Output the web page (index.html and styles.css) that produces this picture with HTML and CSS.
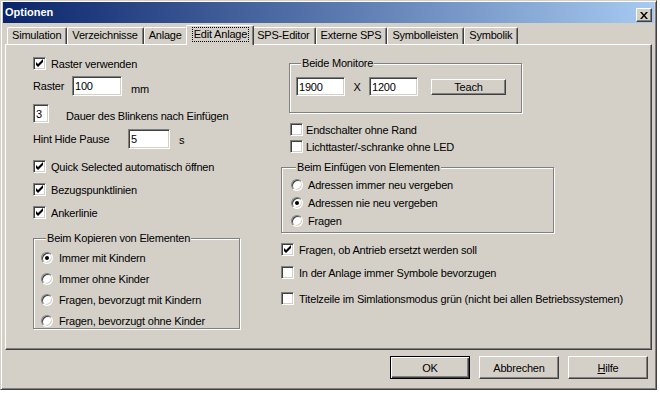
FILE: index.html
```html
<!DOCTYPE html>
<html lang="de">
  <head>
    <meta charset="UTF-8" />
    <title>Optionen</title>
    <link rel="stylesheet" href="styles.css">
  </head>
  <body>
    <div class="window">
      <div class="titlebar">
        <span class="title">Optionen</span>
        <span class="close">
          <svg width="8" height="7" viewBox="0 0 8 7"><path d="M0 0h2l2 2.5L6 0h2L5 3.5 8 7H6L4 4.5 2 7H0l3-3.5z" fill="#000"/></svg>
        </span>
      </div>

      <div class="tabs">
        <div class="tab">Simulation</div>
        <div class="tab">Verzeichnisse</div>
        <div class="tab">Anlage</div>
        <div class="tab active"><span class="focus">Edit Anlage</span></div>
        <div class="tab">SPS-Editor</div>
        <div class="tab">Externe SPS</div>
        <div class="tab">Symbolleisten</div>
        <div class="tab">Symbolik</div>
      </div>

      <div class="panel">
        <div class="col-left">
          <label class="check on first"><span class="box"><svg width="13" height="13" viewBox="0 0 13 13"><polygon points="3,5 5,7 10,2 10,5 5,10 3,8" fill="#000"/></svg></span>Raster verwenden</label>

          <div class="row raster">
            <span class="lbl">Raster</span>
            <input class="field w-raster" type="text" value="100">
            <span class="unit">mm</span>
          </div>

          <div class="row blink">
            <input class="field w-blink" type="text" value="3">
            <span class="after">Dauer des Blinkens nach Einfügen</span>
          </div>

          <div class="row hint">
            <span class="lbl hint-lbl">Hint Hide Pause</span>
            <input class="field w-hint" type="text" value="5">
            <span class="unit-s">s</span>
          </div>

          <label class="check on quick"><span class="box"><svg width="13" height="13" viewBox="0 0 13 13"><polygon points="3,5 5,7 10,2 10,5 5,10 3,8" fill="#000"/></svg></span>Quick Selected automatisch öffnen</label>
          <label class="check on spaced"><span class="box"><svg width="13" height="13" viewBox="0 0 13 13"><polygon points="3,5 5,7 10,2 10,5 5,10 3,8" fill="#000"/></svg></span>Bezugspunktlinien</label>
          <label class="check on spaced"><span class="box"><svg width="13" height="13" viewBox="0 0 13 13"><polygon points="3,5 5,7 10,2 10,5 5,10 3,8" fill="#000"/></svg></span>Ankerlinie</label>

          <fieldset class="group copy">
            <legend>Beim Kopieren von Elementen</legend>
            <label class="radio on"><span class="dot"></span>Immer mit Kindern</label>
            <label class="radio"><span class="dot"></span>Immer ohne Kinder</label>
            <label class="radio"><span class="dot"></span>Fragen, bevorzugt mit Kindern</label>
            <label class="radio"><span class="dot"></span>Fragen, bevorzugt ohne Kinder</label>
          </fieldset>
        </div>

        <div class="col-right">
          <fieldset class="group monitors">
            <legend>Beide Monitore</legend>
            <div class="row size">
              <input class="field w-size" type="text" value="1900">
              <span class="times">X</span>
              <input class="field w-size" type="text" value="1200">
              <button class="btn teach">Teach</button>
            </div>
          </fieldset>

          <label class="check tight end"><span class="box"></span>Endschalter ohne Rand</label>
          <label class="check tight led"><span class="box"></span>Lichttaster/-schranke ohne LED</label>

          <fieldset class="group insert">
            <legend>Beim Einfügen von Elementen</legend>
            <label class="radio"><span class="dot"></span>Adressen immer neu vergeben</label>
            <label class="radio on"><span class="dot"></span>Adressen nie neu vergeben</label>
            <label class="radio"><span class="dot"></span>Fragen</label>
          </fieldset>

          <label class="check on drive"><span class="box"><svg width="13" height="13" viewBox="0 0 13 13"><polygon points="3,5 5,7 10,2 10,5 5,10 3,8" fill="#000"/></svg></span>Fragen, ob Antrieb ersetzt werden soll</label>
          <label class="check symbols"><span class="box"></span>In der Anlage immer Symbole bevorzugen</label>
          <label class="check titlebar-green"><span class="box"></span>Titelzeile im Simlationsmodus grün (nicht bei allen Betriebssystemen)</label>
        </div>
      </div>

      <div class="actions">
        <button class="btn default">OK</button>
        <button class="btn">Abbrechen</button>
        <button class="btn"><u>H</u>ilfe</button>
      </div>
    </div>
  </body>
</html>
```

FILE: styles.css
```css
* {
  margin: 0;
  padding: 0;
  box-sizing: border-box;
}
body {
  background: #fff;
  font-family: "Liberation Sans", Arial, sans-serif;
  font-size: 11px;
  letter-spacing: -0.2px;
  color: #000;
}
.window {
  width: 657px;
  height: 390px;
  background: #d4d0c8;
  border: 1px solid;
  border-color: #d4d0c8 #404040 #404040 #d4d0c8;
  box-shadow: inset 1px 1px #fff, inset -1px -1px #808080;
  padding: 1px 2px 2px 2px;
}
.titlebar {
  height: 21px;
  display: flex;
  justify-content: space-between;
  align-items: flex-end;
  padding: 0 2px 1px 2px;
  background: linear-gradient(to right, #0a246a, #a6caf0);
  color: #fff;
}
.title {
  font-weight: bold;
  letter-spacing: 0;
  align-self: center;
}
.close {
  width: 16px;
  height: 14px;
  display: flex;
  align-items: center;
  justify-content: center;
  background: #d4d0c8;
  border: 1px solid;
  border-color: #fff #404040 #404040 #fff;
  box-shadow: inset -1px -1px #808080;
}

/* tabs */
.tabs {
  display: flex;
  align-items: flex-end;
  height: 21px;
  margin-left: 2px;
  padding-left: 2px;
}
.tab {
  height: 17px;
  line-height: 15px;
  padding: 0 5px 0 4px;
  border: 1px solid;
  border-bottom: none;
  border-color: #fff #404040 #fff #fff;
  border-radius: 2px 2px 0 0;
  box-shadow: inset -1px 0 #808080;
}
.tab.active {
  position: relative;
  z-index: 1;
  height: 20px;
  margin: 0 -2px -1px -2px;
  padding: 1px 5px 0 6px;
  background: #d4d0c8;
}
.focus {
  display: inline-block;
  line-height: 13px;
  padding: 0 1px;
  outline: 1px dotted #000;
  outline-offset: 0;
}

/* panel */
.panel {
  display: flex;
  width: 647px;
  height: 306px;
  margin-left: 2px;
  border: 1px solid;
  border-color: #fff #404040 #404040 #fff;
  box-shadow: inset -1px -1px #808080;
}
.col-left {
  width: 275px;
  padding-left: 27px;
}
.col-right {
  flex: 1;
}

/* controls */
.check {
  display: flex;
  align-items: center;
  height: 13px;
  gap: 5px;
  white-space: nowrap;
}
.check.tight {
  gap: 3px;
}
.box {
  width: 13px;
  height: 13px;
  flex: none;
  background: #fff;
  border: 1px solid;
  border-color: #808080 #fff #fff #808080;
  box-shadow: inset 1px 1px #404040, inset -1px -1px #d4d0c8;
}
.box svg {
  display: block;
  margin: -1px;
}
.radio {
  display: flex;
  align-items: center;
  height: 13px;
  gap: 6px;
  white-space: nowrap;
}
.dot {
  width: 12px;
  height: 12px;
  flex: none;
  display: flex;
  align-items: center;
  justify-content: center;
  border-radius: 50%;
  background: #fff;
  border: 1px solid;
  border-color: #808080 #fff #fff #808080;
  box-shadow: inset 1px 1px #404040, inset -1px -1px #d4d0c8;
}
.radio.on .dot::after {
  content: "";
  width: 4px;
  height: 4px;
  border-radius: 50%;
  background: #000;
}
.field {
  height: 20px;
  background: #fff;
  border: 1px solid;
  border-color: #808080 #fff #fff #808080;
  box-shadow: inset 1px 1px #404040, inset -1px -1px #d4d0c8;
  font: inherit;
  letter-spacing: inherit;
  padding: 0 2px;
  outline: none;
}
.btn {
  height: 23px;
  width: 80px;
  background: #d4d0c8;
  border: 1px solid;
  border-color: #fff #404040 #404040 #fff;
  box-shadow: inset -1px -1px #808080;
  font: inherit;
  letter-spacing: inherit;
  color: #000;
}
.btn.default {
  border-color: #000;
  box-shadow: inset 1px 1px #fff, inset -1px -1px #404040, inset -2px -2px #808080;
}

.row {
  display: flex;
  align-items: center;
}
.group {
  border: 1px solid #808080;
  box-shadow: 1px 1px #fff, inset 1px 1px #fff;
}
.group legend {
  margin-left: 5px;
  padding: 0 1px;
  line-height: 13px;
  background: #d4d0c8;
}
.group .radio:last-child {
  margin-bottom: 0;
}

/* left column */
.first {
  margin-top: 12px;
}
.raster {
  margin-top: 6px;
}
.raster .lbl {
  width: 39px;
}
.w-raster {
  width: 50px;
}
.unit {
  margin: 6px 0 0 9px;
}
.blink {
  margin-top: 8px;
}
.w-blink {
  width: 16px;
  height: 19px;
}
.after {
  margin: 4px 0 0 17px;
}
.hint {
  margin-top: 6px;
}
.hint-lbl {
  width: 95px;
}
.w-hint {
  width: 42px;
}
.unit-s {
  margin: 2px 0 0 9px;
}
.quick {
  margin-top: 11px;
}
.spaced {
  margin-top: 10px;
}
.copy {
  width: 207px;
  margin-top: 13px;
  padding: 0 0 1px 7px;
}
.copy .radio {
  margin-bottom: 8px;
}
.copy .radio:first-of-type {
  margin-top: 6px;
}

/* right column */
.monitors {
  width: 233px;
  height: 56px;
  margin: 12px 0 0 8px;
  padding-left: 6px;
}
.size {
  margin-top: 7px;
}
.w-size {
  width: 49px;
  height: 19px;
}
.times {
  width: 24px;
  text-align: center;
}
.teach {
  width: 75px;
  height: 16px;
  margin-left: 13px;
}
.end {
  margin: 10px 0 0 9px;
}
.led {
  margin: 4px 0 0 9px;
}
.insert {
  width: 273px;
  margin-top: 8px;
  padding: 0 0 5px 9px;
}
.insert .radio {
  margin-bottom: 5px;
  gap: 5px;
}
.insert .radio:first-of-type {
  margin-top: 4px;
}
.drive {
  margin-top: 10px;
}
.symbols {
  margin-top: 10px;
}
.titlebar-green {
  margin-top: 13px;
}

/* buttons */
.actions {
  display: flex;
  justify-content: flex-end;
  gap: 9px;
  padding: 6px 6px 0 0;
}
```
